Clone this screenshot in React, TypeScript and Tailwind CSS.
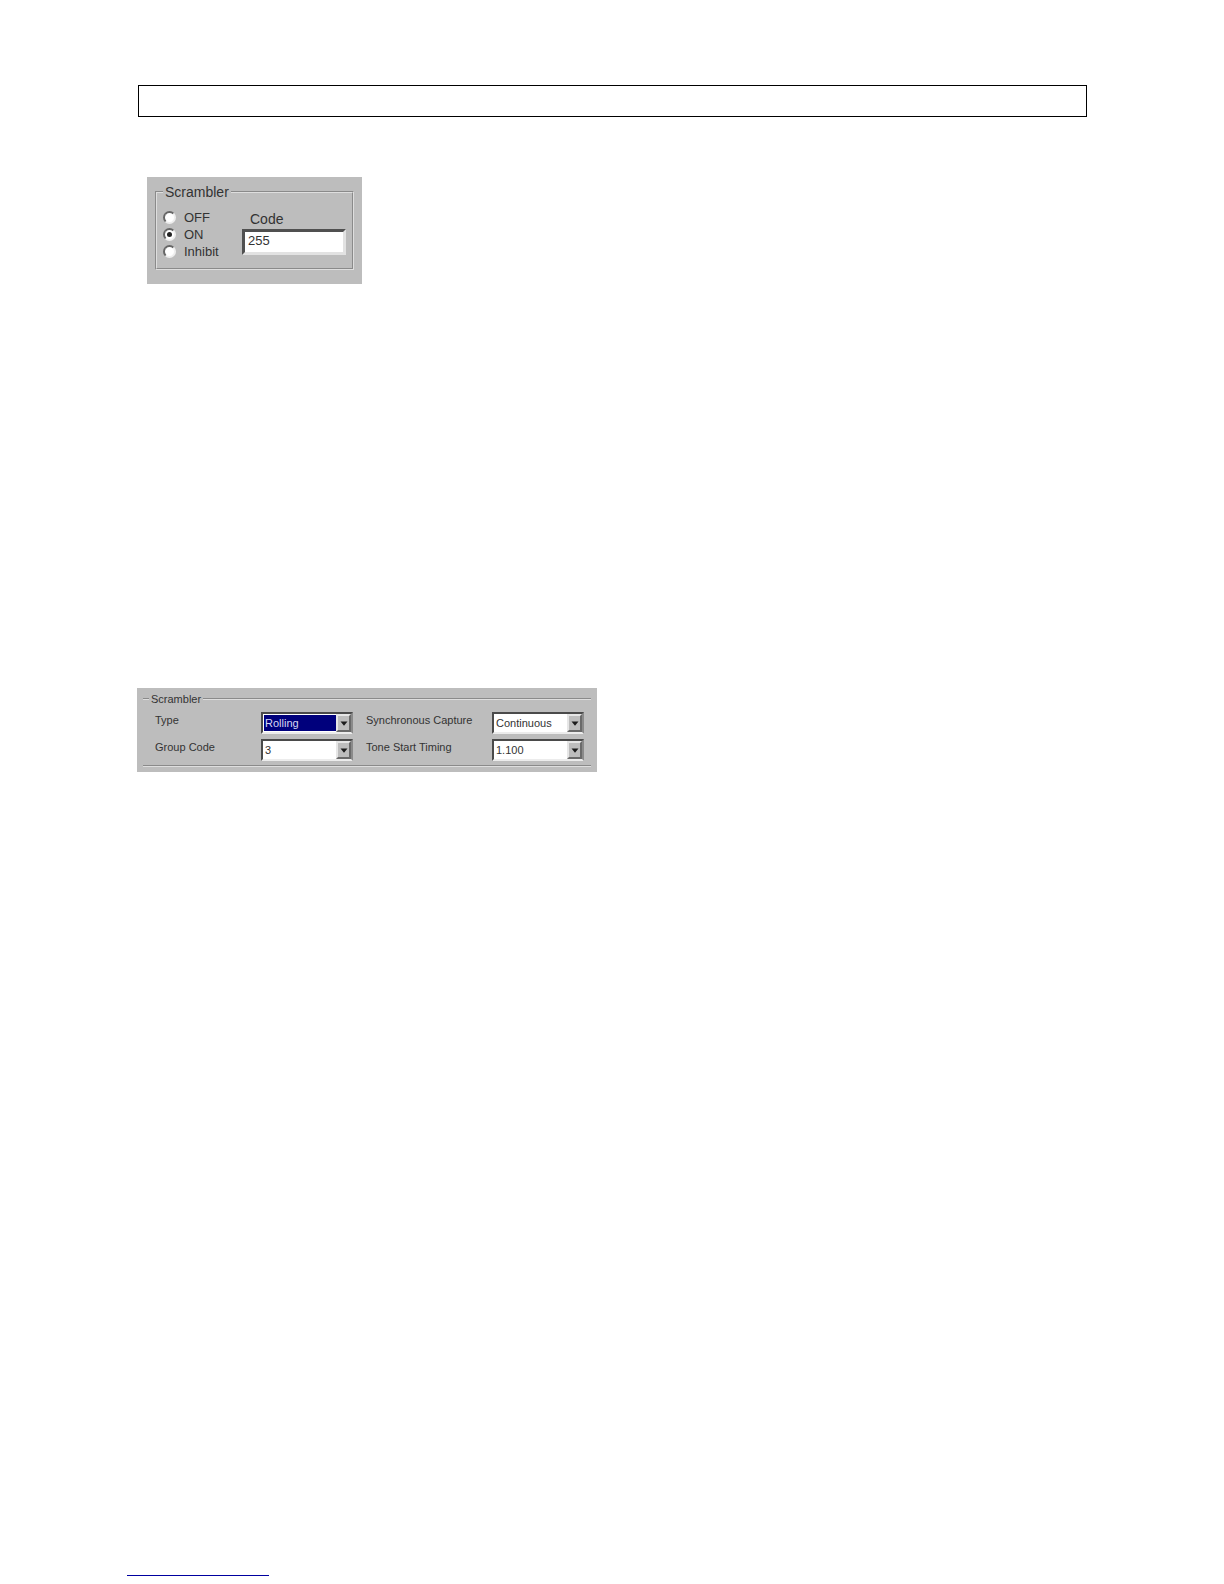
import React, { useState } from 'react';

const modes = ['OFF', 'ON', 'Inhibit'];

type ComboProps = {
  id: string;
  options: string[];
  highlighted?: boolean;
};

const Combo = ({ id, options, highlighted = false }: ComboProps) => {
  return (
    <div className="relative h-[22px] w-[92px] border-2 border-t-[#4a4a4a] border-l-[#4a4a4a] border-r-[#8a8a8a] border-b-[#ececec] bg-white p-px">
      <select
        id={id}
        className={`block h-full w-full appearance-none rounded-none pl-px pr-4 text-[11px] leading-4 outline-none ${
          highlighted ? 'bg-[#00007c] text-[#d8d8f4]' : 'bg-white text-[#333333]'
        }`}
      >
        {options.map((option) => (
          <option key={option}>{option}</option>
        ))}
      </select>
      {/* Drop-down arrow */}
      <span className="pointer-events-none absolute inset-y-0 right-0 flex w-[15px] items-center justify-center border-2 border-t-[#e6e6e6] border-l-[#e6e6e6] border-r-[#6a6a6a] border-b-[#6a6a6a] bg-[#bdbdbd]">
        <svg width="8" height="5" viewBox="0 0 8 5" aria-hidden="true">
          <path d="M0.5 0.5h7L4 4.8z" fill="#1c1c1c" />
        </svg>
      </span>
    </div>
  );
};

const ScramblerPanel = () => {
  const [mode, setMode] = useState('ON');
  const [code, setCode] = useState('255');

  return (
    <section className="w-[215px] bg-[#bdbdbd] px-2 pt-[5px] pb-3.5 font-['Liberation_Sans',sans-serif] text-[#333333]">
      <fieldset className="border-2 [border-style:groove] border-[#dedede] px-1.5 pb-2">
        <legend className="px-0.5 text-[14px] leading-5">Scrambler</legend>
        <div className="flex items-start justify-between pt-[7px]">
          <div>
            {modes.map((item) => (
              <label key={item} className="flex h-[17px] items-center gap-2 text-[13px] leading-4">
                <input
                  type="radio"
                  name="mode"
                  checked={mode === item}
                  onChange={() => setMode(item)}
                  className="flex size-[13px] appearance-none items-center justify-center rounded-full border-2 border-t-[#666666] border-l-[#666666] border-r-[#eeeeee] border-b-[#eeeeee] bg-white before:size-[5px] before:rounded-full checked:before:bg-[#222222]"
                />
                {item}
              </label>
            ))}
          </div>
          <div>
            <label htmlFor="code" className="block pl-2 text-[14px] leading-5">
              Code
            </label>
            <input
              id="code"
              type="text"
              value={code}
              onChange={(e) => setCode(e.target.value)}
              className="block h-[26px] w-[104px] border-[3px] border-t-[#505050] border-l-[#505050] border-r-[#e2e2e2] border-b-[#e2e2e2] bg-white px-[3px] pb-1 text-[13px] leading-4 outline-none"
            />
          </div>
        </div>
      </fieldset>
    </section>
  );
};

const RollingPanel = () => {
  return (
    <section className="w-[460px] bg-[#bdbdbd] px-1.5 pb-[5px] pt-[3px] font-['Liberation_Sans',sans-serif] text-[11px] leading-4 text-[#333333]">
      <fieldset className="border-y-2 [border-style:groove] border-[#dedede] pb-1">
        <legend className="ml-1.5 px-0.5">Scrambler</legend>
        <div className="grid grid-cols-[106px_105px_126px_92px] gap-y-[5px] pl-3 pt-[5px]">
          <label htmlFor="type">Type</label>
          <Combo id="type" options={['Rolling']} highlighted />
          <label htmlFor="capture">Synchronous Capture</label>
          <Combo id="capture" options={['Continuous']} />
          <label htmlFor="group">Group Code</label>
          <Combo id="group" options={['3']} />
          <label htmlFor="timing">Tone Start Timing</label>
          <Combo id="timing" options={['1.100']} />
        </div>
      </fieldset>
    </section>
  );
};

const App = () => {
  return (
    <div className="flex min-h-screen flex-col bg-white pl-[127px] pr-[126px] pt-[85px] pb-2">
      <header className="mx-[11px] h-8 border border-black" />

      <main>
        <div className="ml-5 mt-[60px]">
          <ScramblerPanel />
        </div>
        <div className="ml-2.5 mt-[404px]">
          <RollingPanel />
        </div>
      </main>

      <footer className="mt-auto">
        <div className="w-[142px] border-b border-[#0000a0]" />
      </footer>
    </div>
  );
};

export default App;
